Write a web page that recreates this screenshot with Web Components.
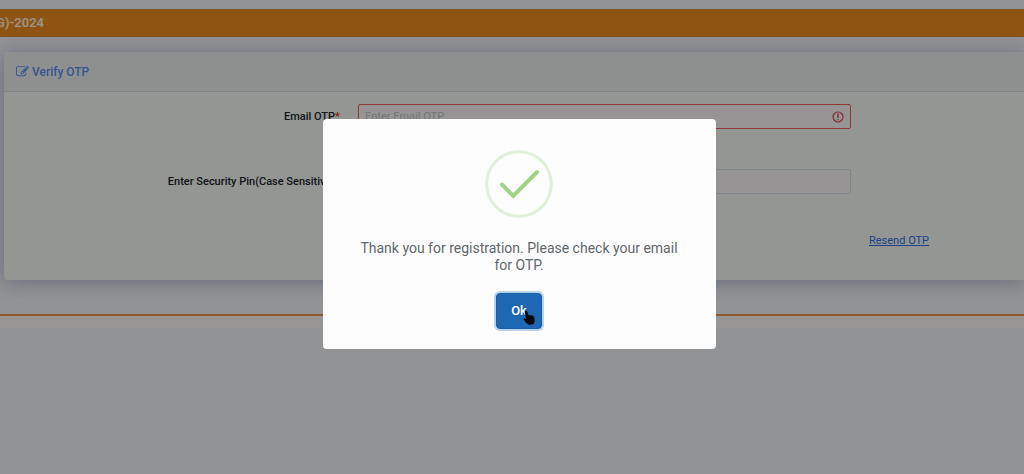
<!DOCTYPE html>
<html lang="en">
<head>
<meta charset="utf-8">
<title>Verify OTP</title>
<style>
html,body{margin:0;min-height:100%}
body{background:#f2f5f7;font-family:Roboto,"Liberation Sans",sans-serif;color:#20252a;overflow-x:hidden}
</style>
</head>
<body>
<otp-page></otp-page>
<script>
const define=(name,html,ready)=>customElements.define(name,class extends HTMLElement{
  constructor(){super();this.attachShadow({mode:'open'}).innerHTML=html;if(ready)this.ready=ready;}
  connectedCallback(){if(this.ready)this.ready(this);}
});

define('title-bar',`<style>
:host{display:flex;align-items:center;height:28px;background:#ee8d20;border-block:1px solid #dc8a35;box-sizing:border-box;margin-top:9px}
h1{margin:0;width:44px;overflow:hidden;display:flex;justify-content:flex-end;white-space:nowrap;font-size:13px;line-height:20px;font-weight:600;color:#fff3df}
</style><h1><slot></slot></h1>`);

define('panel-card',`<style>
:host{display:block;margin:15px 0 0 4px;background:#f7faf6;border-radius:4px 0 0 4px;box-shadow:0 2px 20px rgba(70,85,150,.42)}
header{display:flex;align-items:center;gap:3px;height:40px;box-sizing:border-box;padding:0 12px;background:#edf0ee;border-bottom:1px solid #dcdfde;border-radius:4px 0 0 0;color:#5c8eee}
h2{margin:0;font-size:12px;line-height:20px;font-weight:500}
svg{display:block;width:13px;height:13px}
section{padding:12px 0 32px}
</style>
<header><svg viewBox="0 0 1792 1792" fill="currentColor" aria-hidden="true"><path d="M888 1184l116-116-152-152-116 116v56h96v96h56zm440-720q-16-16-33 1l-350 350q-17 17-1 33t33-1l350-350q17-17 1-33zm80 594v190q0 119-84.500 203.500t-203.500 84.500h-832q-119 0-203.500-84.500t-84.500-203.500v-832q0-119 84.500-203.500t203.500-84.500h832q63 0 117 25 15 7 18 23 3 17-9 29l-49 49q-14 14-32 8-23-6-45-6h-832q-66 0-113 47t-47 113v832q0 66 47 113t113 47h832q66 0 113-47t47-113v-126q0-13 9-22l64-64q15-15 35-7t20 29zm-96-738l288 288-672 672h-288v-288zm444 132l-92 92-288-288 92-92q28-28 68-28t68 28l152 152q28 28 28 68t-28 68z"/></svg><h2><slot name="title"></slot></h2></header>
<section><slot></slot></section>`);

define('form-field',`<style>
:host{display:grid;grid-template-columns:336fr 493fr 155fr;column-gap:18px;margin-bottom:40px}
label{text-align:right;white-space:nowrap;font-size:11px;line-height:25px;font-weight:500}
b{color:#f5252d;font-weight:500}
.box{display:flex;align-items:center;height:25px;box-sizing:border-box;border:1px solid #d9dee1;border-radius:2px;background:#faf7f7;padding:0 6px}
:host([invalid]) .box{border-color:#ef5e63}
input{flex:1;min-width:0;border:0;outline:0;padding:0;background:none;font:11px/20px Roboto,sans-serif;color:inherit}
input::placeholder{color:#c0c4c6;opacity:1}
svg{display:none;width:12px;height:12px}
:host([invalid]) svg{display:block}
</style>
<label for="entry"><span></span><b>*</b></label>
<div class="box"><input id="entry" type="text"><svg viewBox="0 0 12 12" fill="none" stroke="#df4853" stroke-width="1.2" stroke-linecap="round" aria-hidden="true"><circle cx="6" cy="6" r="5"/><path d="M6 3v3.300M6 8.700v.1" stroke-width="1.500"/></svg></div>`,host=>{
  host.shadowRoot.querySelector('span').textContent=host.getAttribute('label');
  host.shadowRoot.querySelector('input').placeholder=host.getAttribute('placeholder')||'';
});

define('resend-link',`<style>
:host{display:grid;grid-template-columns:336fr 493fr 155fr;column-gap:18px}
a{grid-column:3;justify-self:start;font-size:11px;line-height:14px;color:#2d6fe2;text-decoration:underline}
</style><a href="#resend"><slot></slot></a>`);

define('page-foot',`<style>
:host{display:block;margin-top:34px;border-top:2px solid #ec9650;height:12px;background:#fcfaf7}
</style>`);

define('message-dialog',`<style>
:host{position:fixed;inset:0;display:flex;align-items:center;justify-content:center;background:rgba(0,0,0,.4);padding:0 0 6px 14px;box-sizing:border-box}
.dialog{width:min(393px,90%);box-sizing:border-box;background:#fdfdfd;border-radius:4px;padding:31px 32px 20px;display:flex;flex-direction:column;align-items:center;color:#61666a}
.done{display:block;width:68px;height:68px}
p{margin:22px 0 19px;font-size:14px;line-height:17px;text-align:center}
button{position:relative;width:46px;height:36px;border:1px solid #1a5da6;border-radius:4px;background:#1e67b2;color:#fff;font:500 13px/20px Roboto,sans-serif;padding:0;box-shadow:0 0 0 2px #b5d3ec}
.pointer{position:absolute;left:26px;top:15px;width:12px;height:17px}
</style>
<div class="dialog" role="dialog" aria-modal="true" aria-labelledby="message">
<svg class="done" viewBox="0 0 68 68" fill="none" aria-hidden="true"><circle cx="34" cy="34" r="32.300" stroke="#e1f0da" stroke-width="3"/><path d="M17 34.500 28.300 46 52 22" stroke="#a2d286" stroke-width="4" stroke-linecap="round" stroke-linejoin="miter"/></svg>
<p id="message"><slot></slot></p>
<button type="button">Ok<svg class="pointer" viewBox="0 0 14 18" aria-hidden="true"><path d="M3 1.500Q4.500.8 5 2l1.500 4.500 1.200-.5 1.500.7 1.500-.3 1 1 1.200.4.7 5.200-1 3.500-5.600 1.200L3.500 15 .8 11.300Q.6 9.800 2 10l1.800 1L2 3Q1.900 2 3 1.500Z" fill="#080a0c"/></svg></button>
</div>`);

define('otp-page',`<style>
:host{display:block;overflow:hidden}
main{display:block}
</style>
<title-bar>G)-2024</title-bar>
<main><panel-card><span slot="title">Verify OTP</span>
<form-field invalid label="Email OTP" placeholder="Enter Email OTP"></form-field>
<form-field label="Enter Security Pin(Case Sensitive)"></form-field>
<resend-link>Resend OTP</resend-link>
</panel-card></main>
<page-foot></page-foot>
<message-dialog>Thank you for registration. Please check your email for OTP.</message-dialog>`);
</script>
</body>
</html>
